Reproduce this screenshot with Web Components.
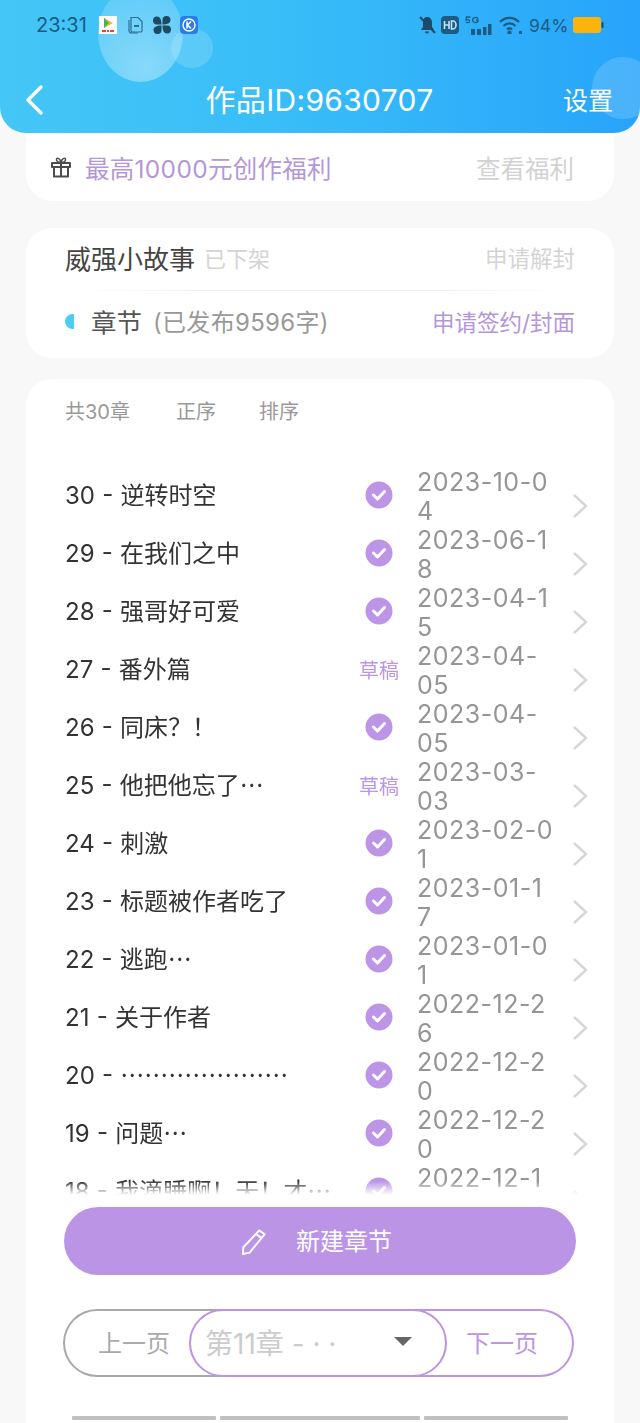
<!DOCTYPE html>
<html lang="zh">
<head>
<meta charset="utf-8">
<title>作品</title>
<style>
  html, body { margin: 0; padding: 0; }
  body {
    width: 640px;
    height: 1423px;
    overflow: hidden;
    background: #f8f8f8;
    font-family: Inter, "Noto Sans CJK SC", sans-serif;
    display: flex;
    flex-direction: column;
  }
</style>
</head>
<body>
<app-header title="作品ID:9630707" action="设置"></app-header>
<benefit-card></benefit-card>
<work-card></work-card>
<chapter-panel>
  <chapter-row num="30" name="逆转时空" date="2023-10-04"></chapter-row>
  <chapter-row num="29" name="在我们之中" date="2023-06-18"></chapter-row>
  <chapter-row num="28" name="强哥好可爱" date="2023-04-15"></chapter-row>
  <chapter-row num="27" name="番外篇" date="2023-04-05" draft></chapter-row>
  <chapter-row num="26" name="同床？！" date="2023-04-05"></chapter-row>
  <chapter-row num="25" name="他把他忘了…" date="2023-03-03" draft></chapter-row>
  <chapter-row num="24" name="刺激" date="2023-02-01"></chapter-row>
  <chapter-row num="23" name="标题被作者吃了" date="2023-01-17"></chapter-row>
  <chapter-row num="22" name="逃跑…" date="2023-01-01"></chapter-row>
  <chapter-row num="21" name="关于作者" date="2022-12-26"></chapter-row>
  <chapter-row num="20" name="…………………" date="2022-12-20"></chapter-row>
  <chapter-row num="19" name="问题…" date="2022-12-20"></chapter-row>
  <chapter-row num="18" name="我滴睡啊！天！才…" date="2022-12-19"></chapter-row>
</chapter-panel>

<script>
const shadow = (el, html) => {
  el.attachShadow({ mode: 'open' });
  el.shadowRoot.innerHTML = html;
};

class StatusBar extends HTMLElement {
  connectedCallback() {
    shadow(this, `
      <style>
        :host { display: flex; align-items: center; height: 50px; padding: 0 36px; color: #1d5b80; position: relative; }
        .time { font-size: 20px; width: 63px; }
        .left, .right { display: flex; align-items: center; }
        .right { margin-left: auto; }
        .pct { font-size: 17.500px; width: 37px; margin: 0 7px; }
        svg { display: block; flex: none; }
      </style>
      <div class="left">
        <span class="time">23:31</span>
        <svg width="18" height="18" viewBox="0 0 18 18" style="margin-right:11px"><rect width="18" height="18" fill="#fff"/><path d="M5 2 14 7 5 12z" fill="#f4b82b"/><path d="M5 2 10 7 5 12z" fill="#3fb55a"/><path d="M3 15h4M8 15h2M11 15h4" stroke="#e2463a" stroke-width="2"/></svg>
        <svg width="15" height="18" viewBox="0 0 15 18" fill="none" stroke="#2a6f97" stroke-width="1.2" style="margin-right:10px"><path d="M3 1.500h7l4 4v9a1.500 1.500 0 0 1-1.500 1.500h-8A1.500 1.500 0 0 1 3 14.500z"/><path d="M1 4v10.500A2.500 2.500 0 0 0 3.500 17H10"/><path d="M6 10h5" stroke-width="2"/></svg>
        <svg width="18" height="18" viewBox="0 0 18 18" fill="#1f4a63" style="margin-right:9px"><path d="M8.500 8.500H4a4 4 0 0 1 0-8c3 0 4.500 3 4.500 8zM9.500 8.500V4a4 4 0 0 1 8 0c0 3-3 4.500-8 4.500zM9.500 9.500H14a4 4 0 0 1 0 8c-3 0-4.500-3-4.500-8zM8.500 9.500V14a4 4 0 0 1-8 0c0-3 3-4.500 8-4.500z"/></svg>
        <svg width="18" height="18" viewBox="0 0 18 18"><rect width="18" height="18" rx="4" fill="#2a7de8"/><circle cx="9" cy="9" r="6" fill="none" stroke="#fff" stroke-width="1.400"/><path d="M7 5.500v7M11 5.500 7.500 9l3.500 3.500" fill="none" stroke="#fff" stroke-width="1.500"/></svg>
      </div>
      <div class="right">
        <svg width="17" height="20" viewBox="0 0 17 20" style="margin-right:5px"><path d="M8 2c3.500 0 5 2.500 5 6v4l2 3H2l2-3V7c0-3 1.500-5 4-5zM6 16.500h4a2 2 0 0 1-4 0z" fill="#1d4a68"/><path d="M1 2 16 18" stroke="#1d4a68" stroke-width="2"/></svg>
        <svg width="18" height="18" viewBox="0 0 18 18" style="margin-right:6px"><rect width="18" height="18" rx="4" fill="#1d5b80"/><path d="M3.500 5v8M8 5v8M3.500 9H8M10.500 5v8h1.500a3 4 0 0 0 0-8z" fill="none" stroke="#bfe6fb" stroke-width="1.600"/></svg>
        <svg width="27" height="19" viewBox="0 0 27 19" style="margin-right:7px"><g fill="#1d5b80"><rect x="6" y="13" width="4" height="6"/><rect x="12" y="13" width="4" height="6"/><rect x="18" y="11" width="3.500" height="8"/><rect x="23" y="8" width="3.500" height="11"/></g><path d="M5.500 1H1.500L1 4c2-1 4 0 3.500 1.500S2 7 1 6M13 2.500C11 .5 7.500 1.500 7.500 4s3.500 3.500 5.500 1.500V4h-2" fill="none" stroke="#1d5b80" stroke-width="1.300"/></svg>
        <svg width="23" height="18" viewBox="0 0 23 18" fill="none" stroke="#1d5b80" stroke-width="2.200"><path d="M1 6c5.500-5.500 13.500-5.500 19 0M4.500 10c3.500-3.500 8.500-3.500 12 0M8 13.500c1.500-1.500 3.500-1.500 5 0"/><circle cx="10.500" cy="16.500" r="1" fill="#1d5b80"/><circle cx="21.500" cy="16.500" r=".6" fill="#1d5b80"/></svg>
        <span class="pct">94%</span>
        <svg width="31" height="16" viewBox="0 0 31 16"><rect width="28" height="16" rx="3" fill="#fdb40a"/><rect x="28.500" y="5" width="2" height="6" rx="1" fill="#1d4a68"/></svg>
      </div>
    `);
  }
}

class AppHeader extends HTMLElement {
  connectedCallback() {
    shadow(this, `
      <style>
        :host {
          display: block; flex: none; height: 133px; position: relative; overflow: hidden; box-sizing: border-box;
          border-radius: 0 0 26px 26px; color: #fff; z-index: 1;
          background: linear-gradient(90deg, #44c6f6 0%, #39bdf8 45%, #27a4fb 100%);
        }
        .bubble { position: absolute; border-radius: 50%; background: radial-gradient(circle at 55% 85%, rgba(255,255,255,.38), rgba(255,255,255,.12)); }
        .b1 { left: 98px; top: -15px; width: 85px; height: 97px; }
        .b2 { left: 171px; top: 28px; width: 42px; height: 40px; background: rgba(255,255,255,.16); }
        .b3 { left: 592px; top: 57px; width: 62px; height: 62px; background: rgba(255,255,255,.16); }
        nav { display: grid; grid-template-columns: 1fr auto 1fr; align-items: center; height: 66px; padding: 0 27px 0 26px; position: relative; margin-top: 17px; }
        .title { font-size: 30px; line-height: 40px; letter-spacing: .3px; }
        .action { justify-self: end; font-size: 25px; margin-bottom: 2px; }
        svg { display: block; }
      </style>
      <div class="bubble b1"></div><div class="bubble b2"></div><div class="bubble b3"></div>
      <status-bar></status-bar>
      <nav>
        <svg width="18" height="30" viewBox="0 0 18 30" fill="none" stroke="#fff" stroke-width="3.400" stroke-linecap="round" stroke-linejoin="round"><path d="M15 2 2 15l13 13"/></svg>
        <span class="title">${this.getAttribute('title')}</span>
        <span class="action">${this.getAttribute('action')}</span>
      </nav>
    `);
  }
}

class BenefitCard extends HTMLElement {
  connectedCallback() {
    shadow(this, `
      <style>
        :host { display: flex; flex: none; align-items: center; height: 68px; margin: 0 26px; padding: 0 40px 0 25px; background: #fff; border-radius: 0 0 26px 26px; font-size: 24.500px; }
        svg { margin-right: 14px; display: block; }
        .text { color: #b397d8; letter-spacing: .3px; }
        .more { margin-left: auto; color: #d2d2d2; }
      </style>
      <svg width="20" height="22" viewBox="0 0 20 22" fill="none" stroke="#4d4d4d" stroke-width="2" stroke-linejoin="round"><path d="M1 7h18v4H1zM3 11v9.500h14V11M10 7v13.500"/><path d="M10 6.500C8 6.500 5.500 5.500 5.500 3.500S9 1.500 10 6.500c1-5 4.500-5 4.500-3S12 6.500 10 6.500z" stroke-width="1.500"/></svg>
      <span class="text">最高10000元创作福利</span>
      <span class="more">查看福利</span>
    `);
  }
}

class WorkCard extends HTMLElement {
  connectedCallback() {
    shadow(this, `
      <style>
        :host { display: block; flex: none; height: 130px; margin: 27px 26px 21px; padding: 0 39px; box-sizing: border-box; background: #fff; border-radius: 26px; }
        .row { display: flex; align-items: center; box-sizing: border-box; height: 62px; padding-bottom: 4px; }
        .row + .row { height: 68px; padding-bottom: 8px; border-top: 1px solid transparent; border-image: linear-gradient(90deg, transparent, #f2f2f2 25%, #f2f2f2 75%, transparent) 1; }
        .name { font-size: 26px; color: #444; }
        .state { font-size: 22px; color: #d4d4d4; margin-left: 9px; }
        .right { margin-left: auto; font-size: 22.500px; color: #d4d4d4; }
        .dot { width: 9px; height: 15px; margin: 2px 17px 0 0; background: #4bcdf4; border-radius: 9px 0 0 9px; }
        .sec { font-size: 25.500px; color: #555; }
        .count { font-size: 24px; letter-spacing: .3px; color: #999; margin-left: 11px; }
        .link { margin-left: auto; font-size: 22.500px; color: #b596da; }
      </style>
      <div class="row"><span class="name">威强小故事</span><span class="state">已下架</span><span class="right">申请解封</span></div>
      <div class="row"><span class="dot"></span><span class="sec">章节</span><span class="count">(已发布9596字)</span><span class="link">申请签约/封面</span></div>
    `);
  }
}

class ChapterRow extends HTMLElement {
  connectedCallback() {
    const status = this.hasAttribute('draft')
      ? '<span class="draft">草稿</span>'
      : '<svg width="28" height="28" viewBox="0 0 28 28"><circle cx="14" cy="14" r="13.500" fill="#bc95e6"/><path d="M8.500 14l4 4 7-7.500" fill="none" stroke="#fff" stroke-width="3" stroke-linecap="round" stroke-linejoin="round"/></svg>';
    // the ellipsis sits mid-height in the CJK font, not on the baseline
    const name = this.getAttribute('name').replace(/…+/g, m => `<span class="cjk">${m}</span>`);
    shadow(this, `
      <style>
        :host { display: grid; grid-template-columns: 284px 60px 163px 16px; align-items: center; height: 58px; flex: none; }
        .title { font-size: 24px; color: #333; white-space: nowrap; overflow: hidden; word-spacing: .5px; padding-bottom: 4px; }
        .cjk { font-family: "Noto Sans CJK SC", sans-serif; }
        .status { display: flex; justify-content: center; }
        .draft { font-size: 20px; color: #bc95e6; }
        .date { font-size: 25px; line-height: 29px; letter-spacing: .5px; color: #959595; width: 136px; word-break: break-all; margin: 4px 0 0 8px; }
        svg { display: block; }
        .chev { margin-top: 22px; }
      </style>
      <span class="title">${this.getAttribute('num')} - ${name}</span>
      <span class="status">${status}</span>
      <span class="date">${this.getAttribute('date')}</span>
      <svg class="chev" width="16" height="26" viewBox="0 0 16 26" fill="none" stroke="#d6d6d6" stroke-width="2.400"><path d="M2 2l12 11L2 24"/></svg>
    `);
  }
}

class ChapterPanel extends HTMLElement {
  connectedCallback() {
    shadow(this, `
      <style>
        :host { display: flex; flex-direction: column; flex: 1; min-height: 0; margin: 0 26px; padding: 0 38px 0 39px; background: #fff; border-radius: 26px 26px 0 0; }
        .meta { display: flex; gap: 46px; flex: none; box-sizing: border-box; height: 64px; padding-bottom: 2px; align-items: center; font-size: 20px; color: #999; }
        .meta span + span + span { margin-left: -3px; }
        .list { display: flex; flex-direction: column; flex: none; height: 731px; margin: 21px -19px 0 0; overflow: hidden;
          -webkit-mask-image: linear-gradient(#000 calc(100% - 14px), transparent);
          mask-image: linear-gradient(#000 calc(100% - 14px), transparent); }
      </style>
      <div class="meta"><span>共30章</span><span>正序</span><span>排序</span></div>
      <div class="list"><slot></slot></div>
      <new-chapter></new-chapter>
      <page-switch></page-switch>
      <bottom-tabs></bottom-tabs>
    `);
  }
}

class NewChapter extends HTMLElement {
  connectedCallback() {
    shadow(this, `
      <style>
        :host { display: flex; flex: none; box-sizing: border-box; align-items: center; justify-content: center; gap: 29px; height: 68px; margin-top: 12px; width: 512px; margin-left: -1px; padding-right: 8px; border-radius: 34px; background: #bc94e6; color: #fff; font-size: 24px; }
        span { padding-bottom: 4px; }
        svg { display: block; }
      </style>
      <svg width="27" height="27" viewBox="0 0 28 28" fill="none" stroke="#fff" stroke-width="2" stroke-linejoin="round"><path d="M20 2.500l5.500 4L10 25.500 3 27l.5-7z"/><path d="M17 6.500l5.500 4"/></svg>
      <span>新建章节</span>
    `);
  }
}

class PageSwitch extends HTMLElement {
  connectedCallback() {
    shadow(this, `
      <style>
        :host { display: flex; flex: none; box-sizing: border-box; height: 68px; width: 511px; margin: 34px 0 0 -2px; font-size: 24px; position: relative; }
        span { white-space: nowrap; }
        .prev { flex: 0 0 172px; box-sizing: border-box; display: flex; align-items: center; padding: 0 0 3px 33px; color: #aaa; border: 2px solid #a9a9a9; border-right: 0; border-radius: 34px 0 0 34px; }
        .select { flex: 0 0 258px; margin-left: -46px; z-index: 1; box-sizing: border-box; display: flex; align-items: center; padding: 0 33px 3px 14px; background: #fff; color: #ccc; border: 2px solid #bc94e6; border-radius: 34px; }
        .chap { font-size: 28px; }
        .tri { margin-left: auto; width: 0; height: 0; border: 9px solid transparent; border-top: 9px solid #666; border-bottom: 0; }
        .next { flex: 1; margin-left: -40px; box-sizing: border-box; display: flex; align-items: center; padding: 0 0 3px 59px; color: #bc94e6; border: 2px solid #bc94e6; border-left: 0; border-radius: 0 34px 34px 0; }
      </style>
      <span class="prev">上一页</span>
      <span class="select"><span class="chap">第11章 - · ·</span><i class="tri"></i></span>
      <span class="next">下一页</span>
    `);
  }
}

class BottomTabs extends HTMLElement {
  connectedCallback() {
    shadow(this, `
      <style>
        :host { display: grid; flex: none; grid-template-columns: 144px 200px 144px; gap: 4px; margin: 39px 0 0 7px; height: 4px; }
        i { background: #c0c0c0; border-radius: 1px; }
      </style>
      <i></i><i></i><i></i>
    `);
  }
}

customElements.define('status-bar', StatusBar);
customElements.define('app-header', AppHeader);
customElements.define('benefit-card', BenefitCard);
customElements.define('work-card', WorkCard);
customElements.define('chapter-row', ChapterRow);
customElements.define('chapter-panel', ChapterPanel);
customElements.define('new-chapter', NewChapter);
customElements.define('page-switch', PageSwitch);
customElements.define('bottom-tabs', BottomTabs);
</script>
</body>
</html>
